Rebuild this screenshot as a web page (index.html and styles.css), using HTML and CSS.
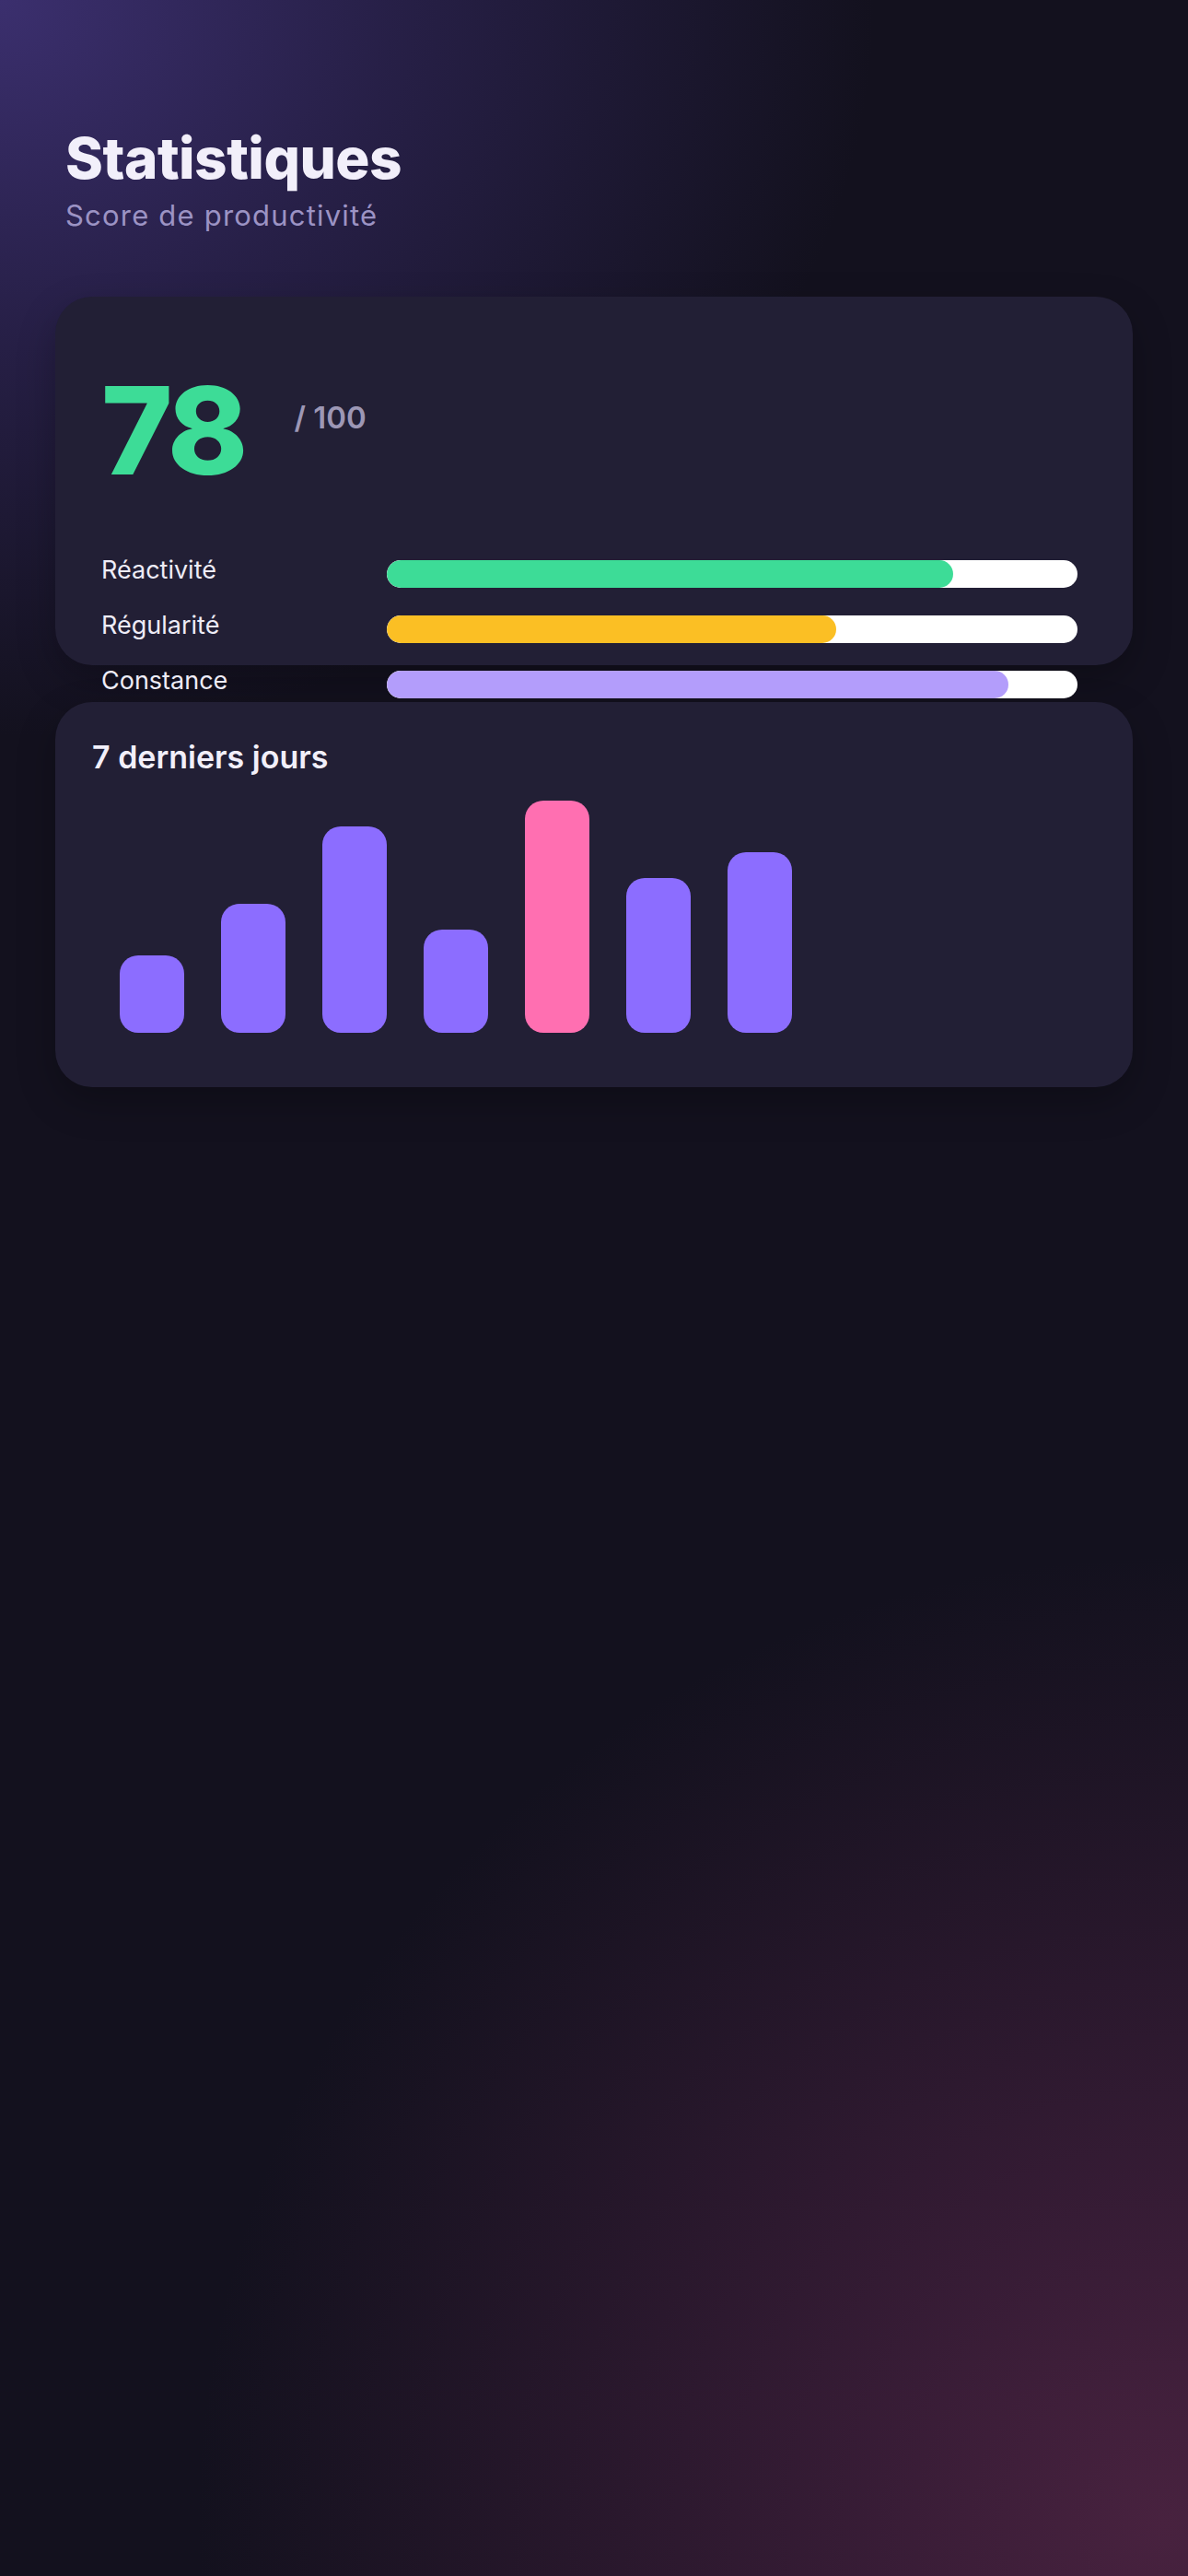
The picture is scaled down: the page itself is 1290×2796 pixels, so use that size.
FILE: index.html
```html
<!DOCTYPE html>
<html lang="fr">
<head>
<meta charset="UTF-8">
<meta name="viewport" content="width=device-width, initial-scale=1.0">
<title>Statistiques</title>
<link rel="stylesheet" href="styles.css">
</head>
<body>
<div class="screen">
  <header class="header">
    <h1 class="title">Statistiques</h1>
    <p class="subtitle">Score de productivité</p>
  </header>

  <section class="card score-card">
    <div class="score">
      <span class="score-value">78</span>
      <span class="score-max">/ 100</span>
    </div>
    <div class="metrics">
      <div class="metric">
        <span class="metric-label">Réactivité</span>
        <div class="track"><div class="fill fill-green" style="width: 82%"></div></div>
      </div>
      <div class="metric">
        <span class="metric-label">Régularité</span>
        <div class="track"><div class="fill fill-yellow" style="width: 65%"></div></div>
      </div>
      <div class="metric">
        <span class="metric-label">Constance</span>
        <div class="track"><div class="fill fill-lavender" style="width: 90%"></div></div>
      </div>
    </div>
  </section>

  <section class="card week-card">
    <h2 class="card-title">7 derniers jours</h2>
    <div class="chart">
      <div class="bar" style="height: 30%"></div>
      <div class="bar" style="height: 50%"></div>
      <div class="bar" style="height: 80%"></div>
      <div class="bar" style="height: 40%"></div>
      <div class="bar bar-today" style="height: 90%"></div>
      <div class="bar" style="height: 60%"></div>
      <div class="bar" style="height: 70%"></div>
    </div>
  </section>
</div>
</body>
</html>
```

FILE: styles.css
```css
* {
  box-sizing: border-box;
}
body {
  margin: 0;
  min-height: 2796px;
  font-family: Inter, "Noto Sans", sans-serif;
  color: #f2effa;
  background:
    radial-gradient(ellipse 950px 800px at 0 0, #3b2f6e 0%, rgba(52, 41, 98, 0.6) 45%, rgba(40, 32, 80, 0) 100%),
    radial-gradient(circle 1050px at 98% 98%, #48223f 0%, rgba(68, 32, 62, 0.75) 30%, rgba(50, 24, 48, 0) 100%),
    #13111e;
}
.screen {
  padding: 135px 60px 0;
}
.header {
  padding-left: 11px;
}
.title {
  margin: 0;
  font-size: 62px;
  font-weight: 800;
  line-height: 1.2;
  letter-spacing: -0.5px;
}
.subtitle {
  margin: 6px 0 0;
  font-size: 31px;
  line-height: 1.2;
  letter-spacing: 1.2px;
  color: #9c93c4;
}
.card {
  background: #221f35;
  border-radius: 40px;
  box-shadow: 0 16px 40px rgba(0, 0, 0, 0.25);
}
.score-card {
  margin-top: 69px;
  height: 400px;
  padding: 50px 60px 0 50px;
}
.score {
  display: flex;
  align-items: flex-start;
  gap: 54px;
  margin-top: 16px;
}
.score-value {
  font-size: 132px;
  font-weight: 800;
  line-height: 1.2;
  color: #3ddc97;
  letter-spacing: -4px;
}
.score-max {
  margin-top: 46px;
  font-size: 33px;
  font-weight: 600;
  line-height: 1.2;
  color: #9d97b5;
}
.metrics {
  display: flex;
  flex-direction: column;
  gap: 30px;
  margin-top: 58px;
}
.metric {
  display: grid;
  grid-template-columns: 310px 1fr;
  align-items: center;
  height: 30px;
}
.metric-label {
  font-size: 27px;
  line-height: 30px;
  margin-bottom: 8px;
  color: #eeecf7;
}
.track {
  height: 30px;
  background: #ffffff;
  border-radius: 15px;
  overflow: hidden;
}
.fill {
  height: 100%;
  border-radius: 15px;
}
.fill-green {
  background: #3ddc97;
}
.fill-yellow {
  background: #fbbf24;
}
.fill-lavender {
  background: #b39dfb;
}
.week-card {
  margin-top: 40px;
  padding: 40px 40px 59px;
}
.card-title {
  margin: 0;
  font-size: 34px;
  font-weight: 600;
  line-height: 1.2;
  color: #f2effa;
}
.chart {
  display: flex;
  align-items: flex-end;
  gap: 40px;
  height: 280px;
  margin-top: -1px;
  padding-left: 30px;
}
.bar {
  width: 70px;
  background: #8c6dff;
  border-radius: 20px;
}
.bar-today {
  background: #ff6fb1;
}
```
